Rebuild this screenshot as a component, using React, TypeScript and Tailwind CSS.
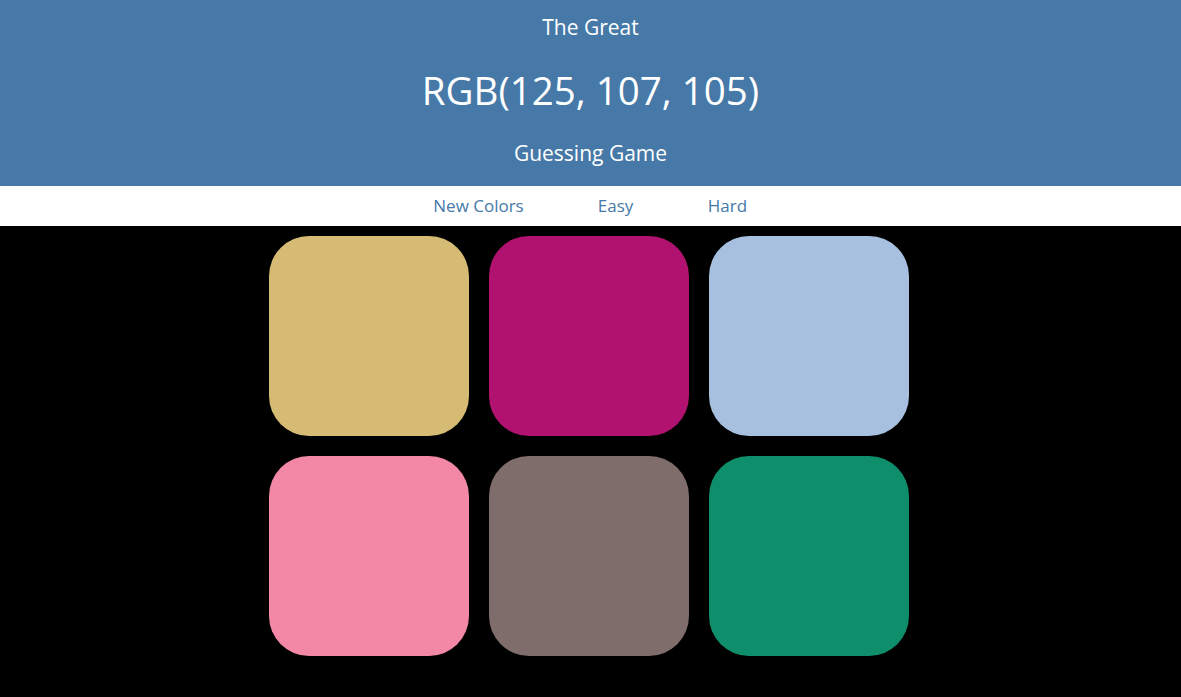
import React from 'react';

const squares = ['#d6bb74', '#b2126f', '#a8c0e0', '#f387a6', '#7f6d6b', '#0f8e6c'];

export default function App() {
  return (
    <div className="min-h-[697px] bg-black font-['Open_Sans',sans-serif]">
      <header className="h-[186px] bg-[#4679a8] text-white text-center flex flex-col">
        <div className="h-[54px] pt-[12px] text-[21px] font-medium leading-[30px]">The Great</div>
        <div className="h-[72px] text-[38.5px] leading-[72px]">RGB(125, 107, 105)</div>
        <div className="h-[60px] pt-[12px] text-[21px] font-medium leading-[30px]">Guessing Game</div>
      </header>

      <nav className="h-10 bg-white flex items-center justify-center text-[17px] text-[#4679a8]">
        <span className="w-[164px] text-center">New Colors</span>
        <span className="w-[110px] text-center">Easy</span>
        <span className="w-[114px] text-center">Hard</span>
      </nav>

      <div className="mx-auto w-[664px] flex flex-wrap">
        {squares.map((c) => (
          <div key={c} className="m-[10px] w-[200px] h-[200px] rounded-[40px]" style={{ backgroundColor: c }} />
        ))}
      </div>
    </div>
  );
}
